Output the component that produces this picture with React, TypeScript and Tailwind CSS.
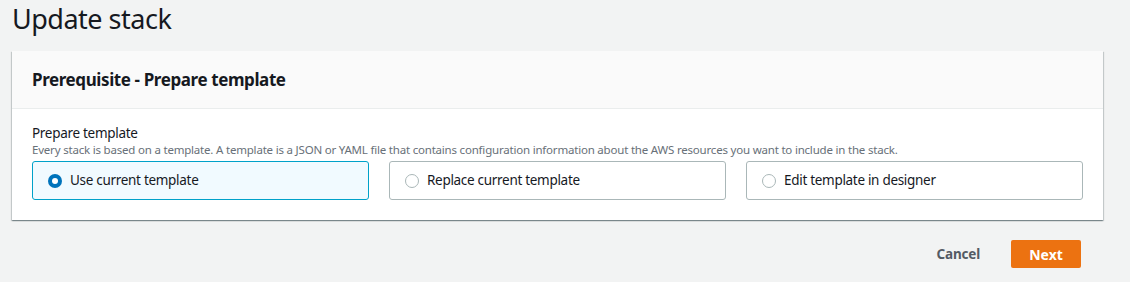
import { useState } from 'react';

const options = ['Use current template', 'Replace current template', 'Edit template in designer'];

function Tile({ label, selected, onClick }: { label: string; selected: boolean; onClick: () => void }) {
  return (
    <button
      onClick={onClick}
      className={`flex items-center h-[39px] pl-[15px] pr-4 rounded-[3px] border text-left ${selected ? 'border-[#00a1c9] bg-[#f1faff]' : 'border-[#aab7b8] bg-white'}`}
    >
      {selected ? (
        <span className="w-[14px] h-[14px] rounded-full bg-[#0073bb] flex items-center justify-center shrink-0">
          <span className="w-[6px] h-[6px] rounded-full bg-white" />
        </span>
      ) : (
        <span className="w-[14px] h-[14px] rounded-full border border-[#aab7b8] bg-white shrink-0" />
      )}
      <span className="ml-[8px] text-[13.5px] tracking-[-0.3px] text-[#16191f]">{label}</span>
    </button>
  );
}

export default function App() {
  const [sel, setSel] = useState(0);

  return (
    <div className="min-h-[282px] bg-[#f2f3f3] px-[12px] pr-[27px] text-[#16191f]" style={{ fontFamily: '"Noto Sans", "Open Sans", Arial, sans-serif' }}>
      <h1 className="text-[27px] leading-[36px] pt-[1px] font-normal tracking-[-0.5px]">Update stack</h1>

      {/* Prerequisite card */}
      <div className="mt-[14px] bg-white shadow-[0_1px_1px_0_rgba(0,28,36,0.3),1px_1px_1px_0_rgba(0,28,36,0.15),-1px_1px_1px_0_rgba(0,28,36,0.15)]">
        <div className="h-[58px] bg-[#fafafa] border-b border-[#eaeded] px-[20px] flex items-center">
          <h2 className="text-[17px] font-bold tracking-[-0.4px] pt-[1px]">Prerequisite - Prepare template</h2>
        </div>
        <div className="px-[20px] pt-[15px] pb-[20px]">
          <div className="text-[13.5px] leading-[18px] tracking-[-0.3px]">Prepare template</div>
          <div className="text-[11.5px] leading-[16px] text-[#687078] tracking-[-0.2px]">
            Every stack is based on a template. A template is a JSON or YAML file that contains configuration information about the AWS resources you want to include in the stack.
          </div>
          <div className="grid grid-cols-3 gap-[20px] mt-[3px]">
            {options.map((o, i) => (
              <Tile key={o} label={o} selected={sel === i} onClick={() => setSel(i)} />
            ))}
          </div>
        </div>
      </div>

      {/* Actions */}
      <div className="flex justify-end items-center mt-[20px] pr-[22px] gap-[31px]">
        <button className="text-[13.5px] font-bold text-[#545b64] tracking-[-0.2px]">Cancel</button>
        <button className="h-[28px] w-[70px] rounded-[2px] bg-[#ec7211] text-white text-[14px] font-bold">Next</button>
      </div>
    </div>
  );
}
